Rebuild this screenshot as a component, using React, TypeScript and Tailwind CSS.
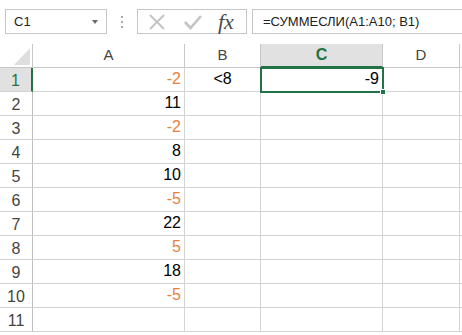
import React from "react";

const values: { v: string; neg?: boolean }[] = [
  { v: "-2", neg: true },
  { v: "11" },
  { v: "-2", neg: true },
  { v: "8" },
  { v: "10" },
  { v: "-5", neg: true },
  { v: "22" },
  { v: "5", neg: true },
  { v: "18" },
  { v: "-5", neg: true },
  { v: "" },
];

const FormulaBar = () => (
  <div className="flex h-[44px] items-start pt-[9px]">
    {/* name box */}
    <div className="relative ml-[5px] flex h-[25px] w-[102px] items-center border border-[#c6c6c6] pl-[8px] text-[13px] text-[#222]">
      C1
      <span className="absolute right-[8px] top-[10px] h-0 w-0 border-x-[3.5px] border-t-[4px] border-x-transparent border-t-[#6a6a6a]" />
    </div>
    {/* grip dots */}
    <div className="flex w-[30px] flex-col items-center gap-[3px] pt-[7px]">
      <span className="h-[2px] w-[2px] bg-[#a8a8a8]" />
      <span className="h-[2px] w-[2px] bg-[#a8a8a8]" />
      <span className="h-[2px] w-[2px] bg-[#a8a8a8]" />
    </div>
    {/* cancel / enter / fx */}
    <div className="flex h-[25px] w-[110px] items-center border border-[#c6c6c6]">
      <svg width="18" height="18" viewBox="0 0 18 18" className="ml-[10px]">
        <path d="M2 2 L16 16 M16 2 L2 16" stroke="#c4c4c4" strokeWidth="2" />
      </svg>
      <svg width="20" height="18" viewBox="0 0 20 18" className="ml-[17px]">
        <path d="M2 9 L7.5 15 L18 3" stroke="#c4c4c4" strokeWidth="2.6" fill="none" />
      </svg>
      <span className="ml-[15px] font-['Liberation_Serif'] text-[22px] italic leading-none text-[#4a4a4a]">
        fx
      </span>
    </div>
    {/* formula input */}
    <div className="ml-[5px] flex h-[25px] flex-1 items-center border border-r-0 border-[#c6c6c6] pl-[10px] text-[13px] text-[#222]">
      =СУММЕСЛИ(A1:A10; B1)
    </div>
  </div>
);

const App = () => {
  const cell = "border-b border-r border-[#d4d4d4]";
  const head = "border-b border-r border-[#c8c8c8] flex items-center justify-center text-[15px] text-[#444]";

  return (
    <div className="relative h-[335px] w-[462px] overflow-hidden bg-white font-['Liberation_Sans',Arial,sans-serif]">
      <FormulaBar />

      <div className="grid grid-cols-[33px_152px_76px_122px_77px_2px] auto-rows-[24px]">
        {/* column headers */}
        <div className="relative border-b border-r border-[#c8c8c8]">
          <svg width="16" height="17" viewBox="0 0 16 17" className="absolute left-[14px] top-[4px]">
            <polygon points="16,0 16,17 0,17" fill="#dedede" />
          </svg>
        </div>
        <div className={head}>A</div>
        <div className={head}>B</div>
        <div className="flex items-center justify-center border-b-2 border-r border-b-[#217346] border-r-[#c8c8c8] bg-[#e1e1e1] text-[16px] font-bold text-[#217346]">
          C
        </div>
        <div className={head}>D</div>
        <div className="border-b border-[#c8c8c8]" />

        {values.map((row, i) => (
          <React.Fragment key={i}>
            <div
              className={
                i === 0
                  ? "flex items-center justify-center border-b border-r-2 border-b-[#d4d4d4] border-r-[#217346] bg-[#e1e1e1] pt-[2px] text-[16px] text-[#217346]"
                  : "flex items-center justify-center border-b border-r border-b-[#d4d4d4] border-r-[#bdbdbd] pt-[2px] text-[16px] text-[#444]"
              }
            >
              {i + 1}
            </div>
            <div
              className={`${cell} flex items-end justify-end pb-[3px] pr-[3px] text-[16px] leading-[18px] ${
                row.neg ? "text-[#e8803c]" : "text-black"
              }`}
            >
              {row.v}
            </div>
            <div className={`${cell} flex items-end justify-center pb-[3px] text-[16px] leading-[18px] text-black`}>
              {i === 0 ? "<8" : ""}
            </div>
            <div className={`${cell} flex items-end justify-end pb-[3px] pr-[3px] text-[16px] leading-[18px] text-black`}>
              {i === 0 ? "-9" : ""}
            </div>
            <div className={cell} />
            <div className="border-b border-[#d4d4d4]" />
          </React.Fragment>
        ))}
      </div>

      {/* active cell C1 */}
      <div className="pointer-events-none absolute left-[260px] top-[67px] h-[26px] w-[124px] border-2 border-[#217346]">
        <span className="absolute -bottom-[4px] -right-[4px] h-[6px] w-[6px] border border-white bg-[#217346]" />
      </div>
    </div>
  );
};

export default App;
